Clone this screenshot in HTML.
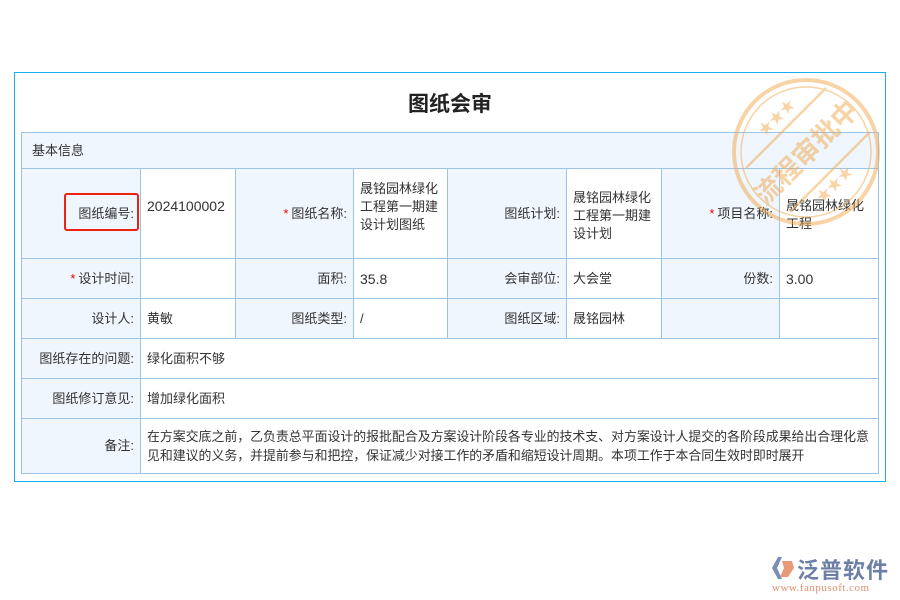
<!DOCTYPE html>
<html><head><meta charset="utf-8"><style>
body{margin:0;width:900px;height:600px;background:#fff;position:relative;font-family:"Liberation Sans","Noto Sans CJK SC",sans-serif;overflow:hidden}
.outer{position:absolute;left:14px;top:72px;width:870px;height:408px;border:1px solid #19b0ee}
.title{position:absolute;left:0;top:88px;width:900px;text-align:center;font-size:21px;font-weight:bold;color:#222}
table{position:absolute;left:21px;top:132px;width:857px;table-layout:fixed;border-collapse:collapse;font-size:13px;color:#333}
td{border:1px solid #9cc4e6;padding:0 6px;vertical-align:middle;line-height:18px;overflow:hidden}
td.l{background:#f0f6fd;text-align:right}
td.v{background:#fff;vertical-align:top}
.s{color:#e00;margin-right:3px}
.red{position:absolute;left:64px;top:193px;width:75px;height:38px;border:2px solid #e21;border-radius:3px;box-sizing:border-box}
</style></head><body>
<div class="outer"></div>
<div class="title">图纸会审</div>
<table>
<colgroup><col style="width:119px"><col style="width:95px"><col style="width:118px"><col style="width:94px"><col style="width:119px"><col style="width:95px"><col style="width:118px"><col style="width:99px"></colgroup>
<tr style="height:36px"><td colspan="8" style="background:#f0f6fd;padding-left:10px">基本信息</td></tr>
<tr style="height:90px"><td class="l">图纸编号:</td><td class="v" style="padding-top:28px;font-size:14px">2024100002</td><td class="l"><span class="s">*</span>图纸名称:</td><td class="v" style="padding-top:11px">晟铭园林绿化工程第一期建设计划图纸</td><td class="l">图纸计划:</td><td class="v" style="padding-top:20px">晟铭园林绿化工程第一期建设计划</td><td class="l"><span class="s">*</span>项目名称:</td><td class="v" style="padding-top:28px">晟铭园林绿化工程</td></tr>
<tr style="height:40px"><td class="l"><span class="s">*</span>设计时间:</td><td></td><td class="l">面积:</td><td style="font-size:14px">35.8</td><td class="l">会审部位:</td><td>大会堂</td><td class="l">份数:</td><td style="font-size:14px">3.00</td></tr>
<tr style="height:40px"><td class="l">设计人:</td><td>黄敏</td><td class="l">图纸类型:</td><td>/</td><td class="l">图纸区域:</td><td>晟铭园林</td><td class="l"></td><td></td></tr>
<tr style="height:40px"><td class="l">图纸存在的问题:</td><td colspan="7">绿化面积不够</td></tr>
<tr style="height:40px"><td class="l">图纸修订意见:</td><td colspan="7">增加绿化面积</td></tr>
<tr style="height:55px"><td class="l">备注:</td><td colspan="7" style="line-height:19px;font-size:12.9px">在方案交底之前，乙负责总平面设计的报批配合及方案设计阶段各专业的技术支、对方案设计人提交的各阶段成果给出合理化意见和建议的义务，并提前参与和把控，保证减少对接工作的矛盾和缩短设计周期。本项工作于本合同生效时即时展开</td></tr>
</table>
<div class="red"></div>
<svg style="position:absolute;left:730px;top:76px" width="152" height="152" viewBox="0 0 152 152" opacity="0.5">
<g fill="none" stroke="#f0a850"><circle cx="76" cy="76" r="72" stroke-width="4"/><circle cx="76" cy="76" r="65" stroke-width="1.5"/>
<line x1="16" y1="92" x2="96" y2="12" stroke-width="2.5"/><line x1="60" y1="136" x2="140" y2="56" stroke-width="2.5"/></g>
<text x="76" y="86" font-size="27" font-weight="bold" fill="#f0a850" text-anchor="middle" transform="rotate(-45 76 76)" font-family="Noto Sans CJK SC,sans-serif">流程审批中</text>
<text x="50" y="45" font-size="15" fill="#f0a850" text-anchor="middle" transform="rotate(-45 50 45)">★★★</text>
<text x="108" y="112" font-size="15" fill="#f0a850" text-anchor="middle" transform="rotate(-45 108 112)">★★★</text>
</svg>
<svg style="position:absolute;left:770px;top:555px" width="26" height="26" viewBox="0 0 26 26"><polygon points="8,2 2,13 8,24 12,24 7,13 12,2" fill="#7a8db5"/><polygon points="12,6 22,6 24,13 18,22 10,22 14,13" fill="#e89a78"/></svg>
<div style="position:absolute;left:797px;top:553px;font-size:22px;color:#6d7fa6;font-weight:bold;letter-spacing:1px">泛普软件</div>
<div style="position:absolute;left:772px;top:582px;font-size:11px;color:#e09070;font-family:'Liberation Serif',serif;letter-spacing:0.5px">www.fanpusoft.com</div>
</body></html>
